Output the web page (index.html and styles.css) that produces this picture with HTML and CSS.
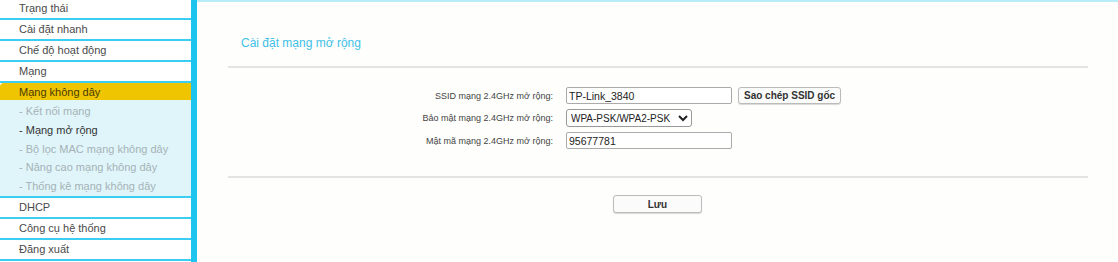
FILE: index.html
```html
<!DOCTYPE html>
<html lang="vi">
<head>
  <meta charset="UTF-8">
  <title>Cài đặt mạng mở rộng</title>
  <link rel="stylesheet" href="styles.css">
</head>
<body>

<div class="page">
  <!-- Left menu -->
  <nav class="sidebar">
    <a class="menu-item first">Trạng thái</a>
    <a class="menu-item">Cài đặt nhanh</a>
    <a class="menu-item">Chế độ hoạt động</a>
    <a class="menu-item">Mạng</a>
    <a class="menu-item active">Mạng không dây</a>
    <div class="submenu">
      <a class="sub-item">- Kết nối mạng</a>
      <a class="sub-item current">- Mạng mở rộng</a>
      <a class="sub-item">- Bộ lọc MAC mạng không dây</a>
      <a class="sub-item">- Nâng cao mạng không dây</a>
      <a class="sub-item">- Thống kê mạng không dây</a>
    </div>
    <a class="menu-item">DHCP</a>
    <a class="menu-item">Công cụ hệ thống</a>
    <a class="menu-item">Đăng xuất</a>
  </nav>

  <!-- Main content -->
  <main class="content">
    <h2 class="title">Cài đặt mạng mở rộng</h2>
    <hr class="divider">

    <form class="form">
      <div class="row">
        <label class="label">SSID mạng 2.4GHz mở rộng:</label>
        <input class="field" type="text" value="TP-Link_3840">
        <button type="button" class="btn">Sao chép SSID gốc</button>
      </div>
      <div class="row">
        <label class="label">Bảo mật mạng 2.4GHz mở rộng:</label>
        <select class="select">
          <option>WPA-PSK/WPA2-PSK</option>
        </select>
      </div>
      <div class="row">
        <label class="label">Mật mã mạng 2.4GHz mở rộng:</label>
        <input class="field" type="text" value="95677781">
      </div>
    </form>

    <hr class="divider">

    <div class="actions">
      <button type="button" class="btn save">Lưu</button>
    </div>
  </main>
</div>

</body>
</html>
```

FILE: styles.css
```css
/* Global */
body {
  margin: 0;
  font-family: 'Liberation Sans', Arial, sans-serif;
  background: #fefefc;
  color: #333;
}

.page {
  display: flex;
  height: 262px;
  overflow: hidden;
}

/* Sidebar */
.sidebar {
  width: 191px;
  flex-shrink: 0;
  border-right: 6px solid #1cc4ee;
  background: #fff;
  display: flex;
  flex-direction: column;
}

.menu-item {
  display: block;
  flex-shrink: 0;
  height: 19px;
  line-height: 19px;
  padding-left: 19px;
  font-size: 11px;
  color: #4a4a4a;
  border-bottom: 2px solid #3ccdf2;
  background: #fff;
}

.menu-item.first {
  margin-top: -1px;
}

.menu-item.active {
  height: 17px;
  line-height: 18px;
  background: #eec500;
  color: #4a3a00;
  border-bottom: none;
  border-radius: 4px 0 0 0;
}

.submenu {
  flex-shrink: 0;
  background: #dff5fa;
  height: 94px;
  padding-top: 2px;
  border-bottom: 2px solid #3ccdf2;
  display: flex;
  flex-direction: column;
}

.sub-item {
  display: block;
  height: 18.8px;
  line-height: 19px;
  padding-left: 19px;
  font-size: 11px;
  color: #a6b2b6;
}

.sub-item.current {
  color: #333;
}

/* Content */
.content {
  flex: 1;
  border-top: 2px solid #b9ecf9;
  padding: 0 30px 0 31px;
}

.title {
  margin: 33px 0 0 13px;
  font-size: 12px;
  font-weight: normal;
  color: #3ec0e8;
  height: 17px;
  line-height: 17px;
}

.divider {
  margin: 14px 0 0;
  border: none;
  border-top: 2px solid #e4e4e2;
}

.form {
  display: flex;
  flex-direction: column;
  gap: 5px;
  padding: 19px 0 13px;
}

.row {
  display: flex;
  align-items: center;
  gap: 13px;
}

.label {
  width: 325px;
  text-align: right;
  font-size: 9px;
  color: #444;
}

.field {
  width: 160px;
  height: 13px;
  padding: 1px 2px;
  border: 1px solid #aaa;
  border-radius: 2px;
  font-family: 'Liberation Sans', Arial, sans-serif;
  font-size: 10.5px;
  color: #222;
  background: #fff;
}

.select {
  width: 126px;
  height: 18px;
  font-family: 'Liberation Sans', Arial, sans-serif;
  font-size: 10px;
  color: #222;
  border: 1px solid #999;
  border-radius: 3px;
  background: #fff;
  padding: 0;
}

.btn {
  height: 17px;
  padding: 0 5px;
  margin-left: -7px;
  font-family: 'Liberation Sans', Arial, sans-serif;
  font-size: 10px;
  font-weight: bold;
  color: #333;
  background: #fbfbfb;
  border: 1px solid #bbb;
  border-radius: 3px;
  box-shadow: 0 1px 1px rgba(0, 0, 0, 0.15);
}

.actions {
  display: flex;
  padding: 17px 0 0 385px;
}

.save {
  width: 89px;
  margin-left: 0;
  height: 18px;
}
```
